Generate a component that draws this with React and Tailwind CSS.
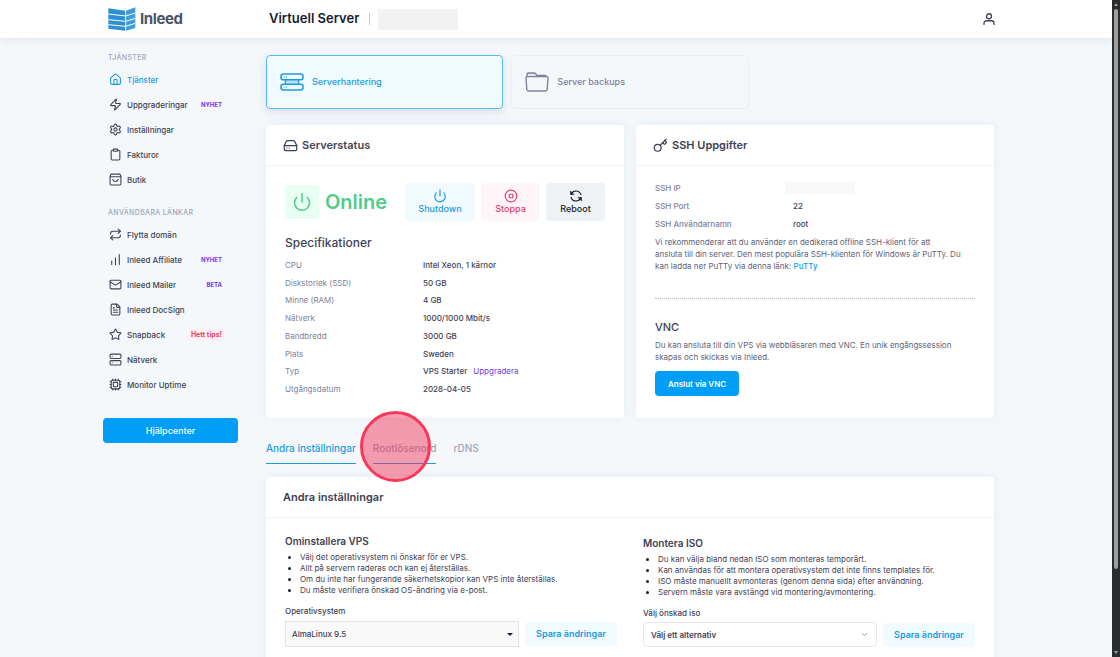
import React from 'react';
import clsx from 'clsx';
import {
  House, Zap, Settings, Clipboard, Repeat, ChartNoAxesColumnIncreasing, Mail, FileText,
  Star, Server, Cpu, HardDrive, Key, Power, CircleStop, ChevronDown,
} from 'lucide-react';

const Bag = ({ className }) => (
  <svg viewBox="0 0 24 24" fill="none" stroke="currentColor" strokeWidth="2" strokeLinecap="round" strokeLinejoin="round" className={className}>
    <path d="M4 2h16l2 4v14a2 2 0 0 1-2 2H4a2 2 0 0 1-2-2V6z" />
    <path d="M2 7h20M7 12c1.5 5 8.500 5 10 0" />
  </svg>
);

const UserIcon = ({ className }) => (
  <svg viewBox="0 0 24 24" fill="none" stroke="currentColor" strokeWidth="2.600" strokeLinecap="round" className={className}>
    <circle cx="12" cy="6.500" r="5" />
    <path d="M2 23v-2.500a5 5 0 0 1 5-5h10a5 5 0 0 1 5 5V23" />
  </svg>
);

const Rack = ({ className }) => (
  <svg viewBox="0 0 24 18" fill="none" stroke="currentColor" strokeWidth="1.500" strokeLinecap="round" className={className}>
    <rect x="1" y="1" width="22" height="5.800" rx="2.400" />
    <rect x="1" y="11.200" width="22" height="5.800" rx="2.400" />
    <path d="M5.500 7v4M18.500 7v4" />
    <path d="M7 8h10M7 10h10" strokeWidth="0.500" />
    <path d="M4 3.900h.1M6.500 3.900h.1M4 14.100h.1M6.500 14.100h.1" strokeWidth="1.100" />
  </svg>
);

const Folder = ({ className }) => (
  <svg viewBox="0 0 24 20" fill="none" stroke="currentColor" strokeWidth="1.400" strokeLinejoin="round" className={className}>
    <path d="M2 5V2.500A1.500 1.500 0 0 1 3.500 1h6C11 1 11 3.400 12.500 3.400H20A1.500 1.500 0 0 1 21.500 5z" fill="#e1e3ea" />
    <path d="M2.500 4.600h19A1.400 1.400 0 0 1 23 6.200l-.8 11.300a1.700 1.700 0 0 1-1.700 1.500h-17a1.700 1.700 0 0 1-1.700-1.500L1 6.200a1.400 1.400 0 0 1 1.500-1.600z" fill="#f5f8fa" />
  </svg>
);

const Reload = ({ className }) => (
  <svg viewBox="0 0 24 22" fill="none" stroke="currentColor" strokeWidth="2" strokeLinecap="round" strokeLinejoin="round" className={className}>
    <path d="M4 7.500C7 1 17 0 20.500 8.500M20 14.500C17 21 7 22 3.500 13.500" />
    <path d="M2.500 3v5.500H8zM21.500 19v-5.500H16z" fill="currentColor" strokeWidth="1" />
  </svg>
);

const Logo = () => (
  <a href="#" className="flex items-center gap-1 text-[#4b5468]">
    <svg viewBox="0 0 82 72" className="h-6 w-7">
      <path d="M0 4l51 7v60L0 65z" fill="#2f8fd3" />
      <path d="M53 11L81 1v62L53 71z" fill="#3f9ddb" />
      <path d="M0 21l52 6 29-9M0 38l52 5 29-9M0 53l52 5 29-9" fill="none" stroke="#fff" strokeWidth="3" />
      <path d="M52 9v63" stroke="#fff" strokeWidth="1.500" />
    </svg>
    <span className="text-[15px] font-bold tracking-tight">Inleed</span>
  </a>
);

const services = [
  { title: 'Tjänster', icon: House, active: true },
  { title: 'Uppgraderingar', icon: Zap, badge: 'NYHET' },
  { title: 'Inställningar', icon: Settings },
  { title: 'Fakturor', icon: Clipboard },
  { title: 'Butik', icon: Bag },
];

const links = [
  { title: 'Flytta domän', icon: Repeat },
  { title: 'Inleed Affiliate', icon: ChartNoAxesColumnIncreasing, badge: 'NYHET' },
  { title: 'Inleed Mailer', icon: Mail, badge: 'BETA' },
  { title: 'Inleed DocSign', icon: FileText },
  { title: 'Snapback', icon: Star, badge: 'Hett tips!', hot: true },
  { title: 'Nätverk', icon: Server },
  { title: 'Monitor Uptime', icon: Cpu },
];

const specs = [
  ['CPU', 'Intel Xeon, 1 kärnor'],
  ['Diskstorlek (SSD)', '50 GB'],
  ['Minne (RAM)', '4 GB'],
  ['Nätverk', '1000/1000 Mbit/s'],
  ['Bandbredd', '3000 GB'],
  ['Plats', 'Sweden'],
  ['Typ', 'VPS Starter'],
  ['Utgångsdatum', '2028-04-05'],
];

const reinstallNotes = [
  'Välj det operativsystem ni önskar för er VPS.',
  'Allt på servern raderas och kan ej återställas.',
  'Om du inte har fungerande säkerhetskopior kan VPS inte återställas.',
  'Du måste verifiera önskad OS-ändring via e-post.',
];

const isoNotes = [
  'Du kan välja bland nedan ISO som monteras temporärt.',
  'Kan användas för att montera operativsystem det inte finns templates för.',
  'ISO måste manuellt avmonteras (genom denna sida) efter användning.',
  'Servern måste vara avstängd vid montering/avmontering.',
];

function MenuGroup({ label, items }) {
  return (
    <div>
      <h2 className="px-[5px] text-[7px] leading-3 font-medium tracking-wider text-[#a1a5b7] uppercase">{label}</h2>
      <ul className="mt-[3px]">
        {items.map((item) => (
          <li key={item.title}>
            <a
              href="#"
              className={clsx('flex h-[25px] items-center gap-[5px] pr-3 pl-[6px] text-[8px] font-medium', item.active ? 'text-[#1b9ce0]' : 'text-[#3f4254]')}
            >
              <item.icon className="size-[13px] shrink-0" />
              <span className="whitespace-nowrap">{item.title}</span>
              {item.badge && (
                <span
                  className={clsx('ml-auto rounded px-1 leading-3 font-bold whitespace-nowrap', item.hot ? 'bg-[#fff0f4] text-[7px] text-[#e8416c]' : 'bg-[#f6f5fe] text-[6px] text-[#7239ea]')}
                >
                  {item.badge}
                </span>
              )}
            </a>
          </li>
        ))}
      </ul>
    </div>
  );
}

function Card({ title, icon: Icon, className, children }) {
  return (
    <section className={clsx('rounded bg-white shadow-[0_0_10px_rgba(76,87,125,0.08)]', className)}>
      <header className="flex h-[41px] items-center gap-1 border-b border-[#eff2f5] px-[17px]">
        {Icon && <Icon className="size-[15px]" />}
        <h2 className="text-[11px] leading-4 font-semibold">{title}</h2>
      </header>
      {children}
    </section>
  );
}

function Notes({ items }) {
  return (
    <ul className="mt-[3px] list-disc pl-[15px] text-[8px] leading-[11px] marker:text-[#181c32]">
      {items.map((item) => <li key={item}>{item}</li>)}
    </ul>
  );
}

const SaveButton = () => (
  <button className="h-6 flex-[92] rounded bg-[#f1faff] text-[9px] font-semibold text-[#1b9ce0]">Spara ändringar</button>
);

export default function App() {
  return (
    <div className="flex h-screen bg-[#f4f8fb] font-['Inter',sans-serif] text-[#3f4254]">
      <div className="min-w-0 flex-1 overflow-y-auto [scrollbar-width:none]">
        <header className="bg-white shadow-[0_2px_8px_rgba(82,94,110,0.12)]">
          <div className="mx-auto flex h-[38px] max-w-[906px] items-center pr-[14px]">
            <div className="w-[166px] shrink-0 pl-[5px]"><Logo /></div>
            <h1 className="text-[13px] font-semibold text-[#181c32]">Virtuell Server</h1>
            <span className="ml-[10px] h-3 w-px bg-[#c8ccd4]" />
            <span className="ml-2 h-[21px] w-20 bg-[#f2f2f3]" />
            <button aria-label="Konto" className="ml-auto text-[#3f4254]">
              <UserIcon className="size-3" />
            </button>
          </div>
        </header>

        <div className="mx-auto flex max-w-[906px] gap-7 pr-[15px]">
          <nav className="flex w-[135px] shrink-0 flex-col pt-[14px]">
            <MenuGroup label="Tjänster" items={services} />
            <div className="mt-[15px]">
              <MenuGroup label="Användbara länkar" items={links} />
            </div>
            <button className="mt-[21px] h-[25px] rounded bg-[#009ef7] text-[9px] font-medium text-white">Hjälpcenter</button>
          </nav>

          <main className="min-w-0 flex-1 pt-[17px]">
            <div className="grid grid-cols-3 gap-2">
              <button className="flex h-[54px] items-center gap-2 rounded border border-[#5cbce6] bg-[#f1faff] px-[13px] text-[9px] font-medium text-[#1b9ce0] shadow-[0_3px_10px_rgba(76,87,125,0.16)]">
                <Rack className="h-[18px] w-6" />
                Serverhantering
              </button>
              <button className="flex h-[54px] items-center gap-2 rounded border border-[#ebeff3] px-[13px] text-[9px] font-medium text-[#7e8299]">
                <Folder className="h-5 w-6" />
                Server backups
              </button>
            </div>

            <div className="mt-4 grid grid-cols-2 gap-3">
              <Card title="Serverstatus" icon={HardDrive}>
                <div className="px-[19px] pt-[17px] pb-5">
                  <div className="flex items-center gap-[6px]">
                    <span className="flex size-[34px] items-center justify-center rounded bg-[#e8fff3] text-[#50cd89]">
                      <Power className="size-5" strokeWidth={1.8} />
                    </span>
                    <strong className="text-xl leading-6 font-semibold text-[#50cd89]">Online</strong>
                    <div className="ml-auto flex gap-[6px] text-[9px] leading-3 font-medium">
                      <button className="flex h-[38px] w-[70px] flex-col items-center justify-center rounded bg-[#f1faff] text-[#1b9ce0]">
                        <Power className="size-[14px]" />
                        Shutdown
                      </button>
                      <button className="flex h-[38px] w-[59px] flex-col items-center justify-center rounded bg-[#fff5f8] text-[#e8416c]">
                        <CircleStop className="size-[14px]" />
                        Stoppa
                      </button>
                      <button className="flex h-[38px] w-[59px] flex-col items-center justify-center rounded bg-[#eff2f5] text-[#181c32]">
                        <Reload className="size-[14px]" />
                        Reboot
                      </button>
                    </div>
                  </div>
                  <h3 className="mt-[14px] text-xs leading-4 font-medium">Specifikationer</h3>
                  <table className="mt-[5px] h-[142px] w-full text-[8px] leading-3">
                    <tbody>
                      {specs.map(([label, value]) => (
                        <tr key={label}>
                          <th scope="row" className="w-[138px] p-0 text-left font-normal text-[#7e8299]">{label}</th>
                          <td className="p-0 font-medium">
                            {value}
                            {label === 'Typ' && <a href="#" className="ml-[6px] font-normal text-[#7239ea]">Uppgradera</a>}
                          </td>
                        </tr>
                      ))}
                    </tbody>
                  </table>
                </div>
              </Card>

              <Card title="SSH Uppgifter" icon={Key}>
                <div className="px-[19px] pt-[13px]">
                  <table className="w-full text-[8px]">
                    <tbody>
                      <tr className="h-[18px]">
                        <th scope="row" className="w-[138px] p-0 text-left font-medium text-[#7e8299]">SSH IP</th>
                        <td className="p-0"><span className="-ml-2 block h-3 w-[70px] bg-[#f8f8f9]" /></td>
                      </tr>
                      <tr className="h-[18px]">
                        <th scope="row" className="p-0 text-left font-medium text-[#7e8299]">SSH Port</th>
                        <td className="p-0 font-medium">22</td>
                      </tr>
                      <tr className="h-[18px]">
                        <th scope="row" className="p-0 text-left font-medium text-[#7e8299]">SSH Användarnamn</th>
                        <td className="p-0 font-medium">root</td>
                      </tr>
                    </tbody>
                  </table>
                  <p className="mt-[3px] text-[8px] leading-3 text-[#5e6278]">
                    Vi rekommenderar att du använder en dedikerad offline SSH-klient för att<br />
                    ansluta till din server. Den mest populära SSH-klienten för Windows är PuTTy. Du<br />
                    kan ladda ner PuTTy via denna länk: <a href="#" className="font-medium text-[#009ef7]">PuTTy</a>
                  </p>
                  <hr className="mt-[26px] border-t border-dotted border-[#b5b8c4]" />
                  <h3 className="mt-5 text-[11px] leading-4 font-medium">VNC</h3>
                  <p className="mt-1 text-[8px] leading-3 text-[#5e6278]">
                    Du kan ansluta till din VPS via webbläsaren med VNC. En unik engångssession<br />
                    skapas och skickas via Inleed.
                  </p>
                  <button className="mt-2 h-[25px] rounded bg-[#009ef7] px-[13px] text-[8px] font-semibold text-white">Anslut via VNC</button>
                </div>
              </Card>
            </div>

            <div className="mt-[21px] flex gap-[17px] text-[10px] leading-4 font-medium text-[#a1a5b7]">
              <button className="h-[25px] border-b border-[#1b9ce0] pb-[6px] text-[#1b9ce0]">Andra inställningar</button>
              <button className="relative h-[25px] border-b border-[#1b9ce0] pb-[6px]">
                Rootlösenord
                <span className="absolute -top-7 -left-[13px] size-[71px] rounded-full border-[3px] border-[#f8385b] bg-[#f4294f]/45" />
              </button>
              <button className="h-[25px] border-b border-transparent pb-[6px]">rDNS</button>
            </div>

            <Card title="Andra inställningar" className="mt-[13px]">
              <div className="grid grid-cols-2 gap-[26px] px-[19px] pt-[15px] pb-5">
                <div>
                  <h3 className="text-[10px] leading-4 font-semibold">Ominstallera VPS</h3>
                  <Notes items={reinstallNotes} />
                  <label htmlFor="os" className="mt-[9px] block text-[8px] leading-3 font-medium">Operativsystem</label>
                  <div className="mt-1 flex items-center gap-[6px]">
                    <div className="relative flex-[234]">
                      <select id="os" className="block h-[26px] w-full appearance-none border border-[#e1e3e8] bg-[#f9f9f9] px-[6px] text-[8px] font-medium">
                        <option>AlmaLinux 9.5</option>
                      </select>
                      <span className="pointer-events-none absolute top-3 right-[6px] border-x-[3px] border-t-[3px] border-x-transparent border-t-[#181c32]" />
                    </div>
                    <SaveButton />
                  </div>
                </div>
                <div className="pt-[2px]">
                  <h3 className="text-[10px] leading-4 font-semibold">Montera ISO</h3>
                  <Notes items={isoNotes} />
                  <label htmlFor="iso" className="mt-[9px] block text-[8px] leading-3 font-medium">Välj önskad iso</label>
                  <div className="mt-[3px] flex items-center gap-[6px]">
                    <div className="relative flex-[234]">
                      <select id="iso" className="block h-[25px] w-full appearance-none rounded border border-[#e4e6ef] bg-white px-[7px] text-[8px] font-semibold">
                        <option>Välj ett alternativ</option>
                      </select>
                      <ChevronDown className="pointer-events-none absolute top-2 right-2 size-[9px] text-[#7e8299]" />
                    </div>
                    <SaveButton />
                  </div>
                </div>
              </div>
            </Card>
          </main>
        </div>
      </div>

      <div className="flex w-2 shrink-0 flex-col items-center bg-[#2c2c2c] py-[3px]">
        <span className="border-x-2 border-b-[3px] border-x-transparent border-b-[#9f9f9f]" />
        <span className="mt-[3px] h-[86%] w-1 rounded-full bg-[#9f9f9f]" />
        <span className="mt-auto border-x-2 border-t-[3px] border-x-transparent border-t-[#9f9f9f]" />
      </div>
    </div>
  );
}
